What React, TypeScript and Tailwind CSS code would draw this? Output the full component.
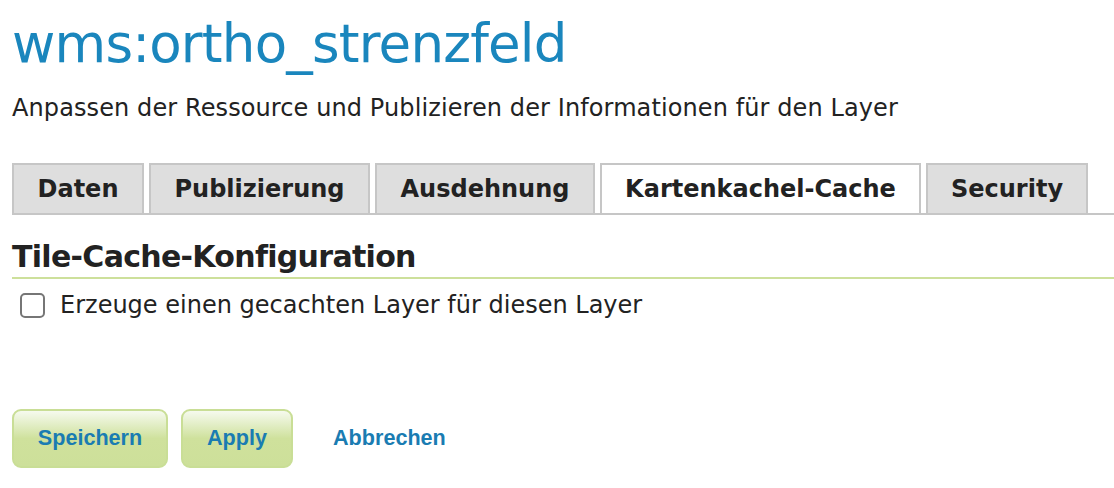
export default function App() {
  const tabs = ["Daten", "Publizierung", "Ausdehnung", "Kartenkachel-Cache", "Security"];
  const widths = ["w-[132px]", "w-[221px]", "w-[220px]", "w-[321px]", "w-[162px]"];
  return (
    <div className="w-[1114px] h-[488px] bg-white overflow-hidden font-['DejaVu_Sans',sans-serif] text-[#222]">
      <div className="pl-[12px] pt-[12px]">
        <h1 className="text-[53px] leading-[64px] tracking-[-0.8px] text-[#1a86bd] font-normal">wms:ortho_strenzfeld</h1>
        <p className="mt-[17px] text-[24px] leading-[30px] tracking-[0.1px]">
          Anpassen der Ressource und Publizieren der Informationen für den Layer
        </p>
        <div className="mt-[40px] flex items-end gap-[5px] border-b-2 border-[#c6c6c6] h-[52px]">
          {tabs.map((t, i) => (
            <div
              key={t}
              className={`${widths[i]} h-[52px] -mb-[2px] border-2 border-[#c6c6c6] flex items-center justify-center text-[24px] font-bold ${
                i === 3 ? "bg-white" : "bg-[#dedede]"
              }`}
            >
              {t}
            </div>
          ))}
        </div>
        <h2 className="mt-[25px] text-[30px] leading-[34px] tracking-[-0.7px] font-bold">Tile-Cache-Konfiguration</h2>
        <div className="mt-[3px] h-[2px] bg-[#cde09b]" />
        <label className="mt-[12px] ml-[8px] flex items-center gap-[15px] text-[24px] leading-[28px]">
          <span className="w-[25px] h-[25px] rounded-[5px] border-2 border-[#767676] bg-white" />
          Erzeuge einen gecachten Layer für diesen Layer
        </label>
        <div className="mt-[90px] flex items-center font-['Liberation_Sans',sans-serif] font-bold text-[21.6px] text-[#1a7cb2]">
          <button className="w-[156px] h-[59px] rounded-[9px] border-2 border-[#c9de96] bg-gradient-to-b from-[#f6faee] via-[#cfe19c] to-[#cde09a]">
            Speichern
          </button>
          <button className="ml-[13px] w-[112px] h-[59px] rounded-[9px] border-2 border-[#c9de96] bg-gradient-to-b from-[#f6faee] via-[#cfe19c] to-[#cde09a]">
            Apply
          </button>
          <span className="ml-[40px]">Abbrechen</span>
        </div>
      </div>
    </div>
  );
}
